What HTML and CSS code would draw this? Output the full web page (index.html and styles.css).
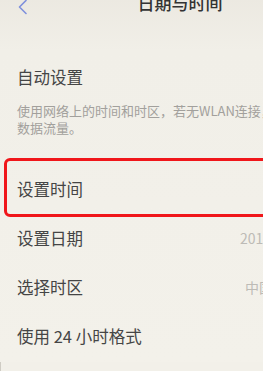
FILE: index.html
```html
<!DOCTYPE html>
<html lang="zh">
<head>
<meta charset="utf-8">
<link rel="stylesheet" href="styles.css">
</head>
<body>
<div class="page">
  <header class="topbar">
    <svg class="back" width="12" height="16" viewBox="0 0 12 16"><path d="M9 1.5 L2.5 8 L9 14.5" fill="none" stroke="#7f90dc" stroke-width="1.6" stroke-linecap="round" stroke-linejoin="round"/></svg>
    <div class="title">日期与时间</div>
  </header>
  <section class="auto">
    <div class="label">自动设置</div>
    <div class="desc">
      <div class="line">使用网络上的时间和时区，若无WLAN连接，将使用移动</div>
      <div class="line">数据流量。</div>
    </div>
  </section>
  <div class="row row-first">
    <span class="label">设置时间</span>
    <div class="highlight"></div>
  </div>
  <div class="row">
    <span class="label">设置日期</span>
    <span class="value">2019年5月20日</span>
  </div>
  <div class="row">
    <span class="label">选择时区</span>
    <span class="value value-tz">中国标准时间</span>
  </div>
  <div class="row">
    <span class="label">使用 24 小时格式</span>
  </div>
</div>
</body>
</html>
```

FILE: styles.css
```css
html, body {
  margin: 0;
  padding: 0;
  width: 263px;
  height: 371px;
  overflow: hidden;
  background: #f2f0e9;
}
body {
  font-family: "Noto Sans CJK SC", "Noto Sans", sans-serif;
  color: #444;
  box-shadow: inset 1px 0 0 #cfccc4;
}
.page {
  width: 360px;
  background: linear-gradient(#ebe8e0 0, #f1efe8 60px, #f3f1ea 100%);
  height: 371px;
}
.topbar {
  position: relative;
  height: 24px;
  margin-top: -9px;
  display: flex;
  align-items: center;
  justify-content: center;
}
.back {
  position: absolute;
  left: 17px;
  top: 8px;
}
.title {
  font-size: 17px;
  line-height: 24px;
  color: #333;
  font-weight: 500;
}
.auto {
  padding: 50px 0 0 17px;
}
.label {
  font-size: 16.5px;
  line-height: 24px;
  color: #454545;
  white-space: nowrap;
}
.desc {
  margin-top: 13px;
  font-size: 13px;
  line-height: 17px;
  color: #a2a09c;
}
.line {
  white-space: nowrap;
}
.row {
  position: relative;
  height: 49px;
  display: grid;
  grid-template-columns: 223px auto;
  align-items: center;
  padding-left: 17px;
}
.row-first {
  margin-top: 28px;
}
.value {
  font-size: 14px;
  color: #bdbbb6;
  white-space: nowrap;
}
.value-tz {
  padding-left: 5px;
}
.highlight {
  position: absolute;
  left: 4px;
  right: 4px;
  top: -6px;
  bottom: -4px;
  border: 3.5px solid #f0161a;
  border-radius: 6px;
}
```
